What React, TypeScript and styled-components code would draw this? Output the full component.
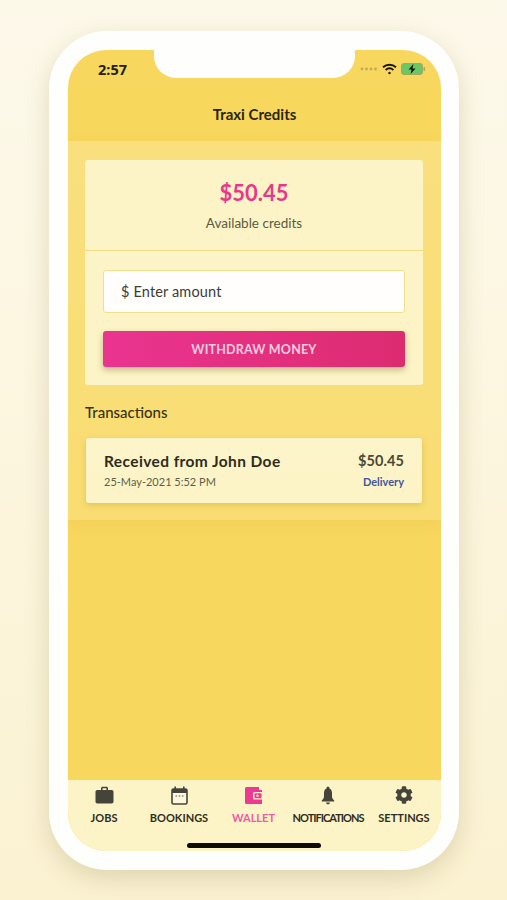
import React from "react";
import styled, { createGlobalStyle } from "styled-components";
import { FaCog } from "react-icons/fa";

const FONT = `"Lato", "Open Sans", "Liberation Sans", sans-serif`;

const Global = createGlobalStyle`
  html, body { margin: 0; padding: 0; }
  body { font-family: ${FONT}; }
`;

const Page = styled.div`
  width: 507px;
  height: 900px;
  overflow: hidden;
  box-sizing: border-box;
  padding: 31px 0 0 49px;
  background: linear-gradient(180deg, #fdf9ea 0%, #fcf5dc 60%, #fbf2d2 100%);
`;

const Phone = styled.div`
  width: 410px;
  height: 839px;
  box-sizing: border-box;
  padding: 19px 18px 19px 19px;
  background: #fefefc;
  border-radius: 58px;
  box-shadow: 0 8px 24px rgba(130, 115, 60, 0.24);
`;

const Screen = styled.div`
  height: 801px;
  border-radius: 38px;
  overflow: hidden;
  display: flex;
  flex-direction: column;
  background: #f8d75f;
`;

const StatusBar = styled.div`
  height: 40px;
  flex: none;
  display: flex;
  align-items: flex-start;
`;

const Time = styled.div`
  width: 86px;
  padding: 10px 0 0 30px;
  box-sizing: border-box;
  font: 700 14.5px "Open Sans", sans-serif;
  color: #22200f;
`;

const Notch = styled.div`
  width: 201px;
  height: 28px;
  background: #fefefc;
  border-radius: 0 0 22px 22px;
`;

const StatusIcons = styled.div`
  flex: 1;
  display: flex;
  align-items: center;
  gap: 4px;
  padding: 13px 0 0 5px;
`;

const Header = styled.div`
  height: 51px;
  flex: none;
  display: flex;
  align-items: flex-start;
  justify-content: center;
  padding-top: 15px;
  box-sizing: border-box;
  font-size: 15px;
  line-height: 18px;
  font-weight: 700;
  color: #2a2610;
  background: #f8d75d;
`;

const Content = styled.div`
  height: 379px;
  flex: none;
  box-sizing: border-box;
  padding: 19px 18px 0 17px;
  background: linear-gradient(180deg, #f9df7e 0%, #f9dd72 100%);
  box-shadow: 0 4px 14px rgba(190, 150, 40, 0.1);
`;

const Spacer = styled.div`
  flex: 1;
`;

const CreditCard = styled.div`
  height: 225px;
  background: #fcf4c6;
  border-radius: 3px;
  display: flex;
  flex-direction: column;
`;

const Balance = styled.div`
  height: 91px;
  flex: none;
  box-sizing: border-box;
  padding-top: 20px;
  border-bottom: 1px solid #f2dc82;
  text-align: center;
`;

const Amount = styled.div`
  font-size: 22px;
  font-weight: 700;
  line-height: 26px;
  color: #e8388a;
`;

const AmountLabel = styled.div`
  margin-top: 9px;
  font-size: 13.5px;
  line-height: 16px;
  color: #5c5a44;
`;

const Form = styled.div`
  padding: 19px 18px 0;
  display: flex;
  flex-direction: column;
  gap: 18px;
`;

const AmountInput = styled.div`
  height: 43px;
  box-sizing: border-box;
  padding-left: 17px;
  display: flex;
  align-items: center;
  background: #fffefc;
  border: 1px solid #f0e08e;
  border-radius: 3px;
  font-size: 14.5px;
  letter-spacing: 0.15px;
  color: #3d3c36;
`;

const WithdrawButton = styled.div`
  height: 36px;
  display: flex;
  align-items: center;
  justify-content: center;
  background: linear-gradient(90deg, #ea3490 0%, #dc2c70 100%);
  border-radius: 3px;
  box-shadow: 0 3px 6px rgba(120, 90, 40, 0.4);
  font-size: 12.5px;
  font-weight: 700;
  letter-spacing: 0.2px;
  color: #fbcbde;
`;

const SectionTitle = styled.div`
  margin-top: 18px;
  font-size: 15px;
  font-weight: 500;
  line-height: 18px;
  color: #3a3212;
`;

const Transaction = styled.div`
  margin: 17px 1px 0;
  height: 65px;
  box-sizing: border-box;
  padding: 13px 18px 0;
  background: linear-gradient(180deg, #fcf5ca 0%, #fcf4c6 100%);
  border-radius: 3px;
  box-shadow: 0 2px 6px rgba(170, 135, 40, 0.3);
`;

const TxRow = styled.div<{ $gap?: number }>`
  display: flex;
  justify-content: space-between;
  align-items: center;
  margin-top: ${(p) => p.$gap ?? 0}px;
`;

const TxTitle = styled.div`
  font-size: 15.5px;
  font-weight: 700;
  line-height: 20px;
  letter-spacing: 0.4px;
  color: #2e2c1e;
`;

const TxAmount = styled.div`
  font-size: 14.5px;
  font-weight: 700;
  line-height: 20px;
  letter-spacing: 0.1px;
  color: #4a4836;
`;

const TxDate = styled.div`
  font-size: 11px;
  line-height: 14px;
  color: #5f5d4a;
`;

const TxType = styled.div`
  font-size: 11px;
  font-weight: 700;
  line-height: 14px;
  color: #3f56a0;
`;

const TabBar = styled.div`
  height: 71px;
  flex: none;
  position: relative;
  display: grid;
  grid-template-columns: 72px 78px 71px 78px 74px;
  background: #fcf4c6;
`;

const Tab = styled.div<{ $active?: boolean }>`
  display: flex;
  flex-direction: column;
  align-items: center;
  padding-top: 5px;
  color: ${(p) => (p.$active ? "#ec3a92" : "#45443a")};
`;

const IconSlot = styled.div`
  height: 20px;
  display: flex;
  align-items: center;
  justify-content: center;
`;

const TabLabel = styled.div<{ $active?: boolean; $tight?: boolean }>`
  margin-top: 6px;
  font-size: 11px;
  line-height: 14px;
  font-weight: 700;
  white-space: nowrap;
  letter-spacing: ${(p) => (p.$tight ? "-1px" : "0")};
  color: ${(p) => (p.$active ? "#ee5ca5" : "#2f2e25")};
`;

const HomeIndicator = styled.div`
  position: absolute;
  left: 119px;
  bottom: 3px;
  width: 134px;
  height: 5px;
  border-radius: 3px;
  background: #0c0b05;
`;

const Dots = () => (
  <svg width="18" height="4" viewBox="0 0 18 4">
    {[2, 6.5, 11, 15.5].map((x) => (
      <circle key={x} cx={x} cy="2" r="1.4" fill="#bcaa60" />
    ))}
  </svg>
);

const Wifi = () => (
  <svg width="15" height="12" viewBox="0 0 15 12" fill="none" stroke="#17150a" strokeWidth="1.9">
    <path d="M1 4.200c3.700-3.300 9.300-3.300 13 0" />
    <path d="M3.600 7c2.300-2 5.500-2 7.800 0" />
    <circle cx="7.500" cy="10" r="1.200" fill="#17150a" stroke="none" />
  </svg>
);

const Battery = () => (
  <svg width="25" height="12" viewBox="0 0 25 12">
    <rect x="0.500" y="0.500" width="21" height="11" rx="2.500" fill="#69c765" stroke="#a8a65e" />
    <rect x="22.500" y="4" width="1.600" height="4" rx="0.800" fill="#a8a65e" />
    <path d="M12.500 1 7.600 6.600h3l-1 4.400 4.900-5.600h-3z" fill="#17150a" />
  </svg>
);

const Briefcase = () => (
  <svg width="19" height="18" viewBox="0 0 19 18" fill="#45443a">
    <path d="M6 4.500V2.200C6 1.300 6.700.7 7.500.7h4c.8 0 1.500.6 1.500 1.500v2.300h-1.600V2.300H7.600v2.200z" />
    <rect x="0.500" y="4" width="18" height="13.500" rx="1.800" />
  </svg>
);

const Calendar = () => (
  <svg width="17" height="19" viewBox="0 0 17 19">
    <rect x="1" y="3" width="15" height="15" rx="1.500" fill="#fdf8dc" stroke="#45443a" strokeWidth="1.600" />
    <rect x="1" y="3" width="15" height="4" fill="#45443a" />
    <rect x="3.400" y="0.500" width="1.600" height="4" fill="#45443a" />
    <rect x="12" y="0.500" width="1.600" height="4" fill="#45443a" />
    <path d="M4.500 10h1.600M7.700 10h1.600M10.900 10h1.600" stroke="#8f8d78" strokeWidth="1.400" />
  </svg>
);

const Wallet = () => (
  <svg width="19" height="19" viewBox="0 0 19 19">
    <path d="M1 2.500A1.500 1.500 0 0 1 2.500 1H15v3h3v14H2.500A1.500 1.500 0 0 1 1 16.500z" fill="#ec3a92" />
    <rect x="9" y="6" width="10" height="7.500" rx="1.500" fill="#fcf4c6" />
    <rect x="10.500" y="7.200" width="7" height="5" rx="1" fill="#ec3a92" />
    <circle cx="13.500" cy="9.700" r="1.200" fill="#fcf4c6" />
  </svg>
);

const Bell = () => (
  <svg width="16" height="19" viewBox="0 0 16 19" fill="#45443a">
    <circle cx="8" cy="1.900" r="1.500" />
    <path d="M8 2.300c-2.500 0-4 2-4 4.500v3.400c0 1.800-.8 3-2.200 4.200v1h12.400v-1C12.800 13.200 12 12 12 10.200V6.800c0-2.500-1.500-4.500-4-4.500z" />
    <path d="M6 16.400h4c0 1.100-.9 1.900-2 1.900s-2-.8-2-1.900z" />
  </svg>
);

const tabs = [
  { label: "JOBS", icon: <Briefcase /> },
  { label: "BOOKINGS", icon: <Calendar /> },
  { label: "WALLET", icon: <Wallet />, active: true },
  { label: "NOTIFICATIONS", icon: <Bell />, tight: true },
  { label: "SETTINGS", icon: <FaCog size={18} /> },
];

export default function App() {
  return (
    <Page>
      <Global />
      <Phone>
        <Screen>
          <StatusBar>
            <Time>2:57</Time>
            <Notch />
            <StatusIcons>
              <Dots />
              <Wifi />
              <Battery />
            </StatusIcons>
          </StatusBar>
          <Header>Traxi Credits</Header>
          <Content>
            <CreditCard>
              <Balance>
                <Amount>$50.45</Amount>
                <AmountLabel>Available credits</AmountLabel>
              </Balance>
              <Form>
                <AmountInput>$ Enter amount</AmountInput>
                <WithdrawButton>WITHDRAW MONEY</WithdrawButton>
              </Form>
            </CreditCard>
            <SectionTitle>Transactions</SectionTitle>
            <Transaction>
              <TxRow>
                <TxTitle>Received from John Doe</TxTitle>
                <TxAmount>$50.45</TxAmount>
              </TxRow>
              <TxRow $gap={4}>
                <TxDate>25-May-2021 5:52 PM</TxDate>
                <TxType>Delivery</TxType>
              </TxRow>
            </Transaction>
          </Content>
          <Spacer />
          <TabBar>
            {tabs.map((t) => (
              <Tab key={t.label} $active={t.active}>
                <IconSlot>{t.icon}</IconSlot>
                <TabLabel $active={t.active} $tight={t.tight}>
                  {t.label}
                </TabLabel>
              </Tab>
            ))}
            <HomeIndicator />
          </TabBar>
        </Screen>
      </Phone>
    </Page>
  );
}
